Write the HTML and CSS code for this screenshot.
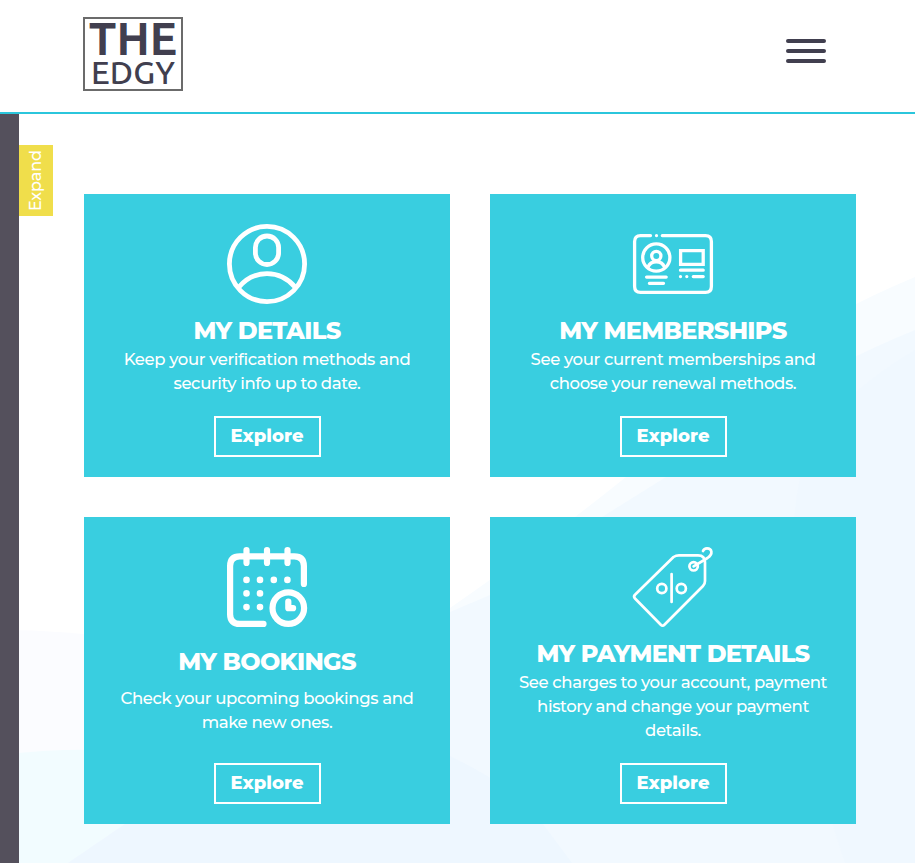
FILE: index.html
```html
<!DOCTYPE html>
<html lang="en">
<head>
<meta charset="utf-8">
<title>The Edgy</title>
<link rel="stylesheet" href="styles.css">
</head>
<body>
<header class="header">
  <div class="logo">
    <span class="logo-the">THE</span>
    <span class="logo-edgy">EDGY</span>
  </div>
  <button class="menu" aria-label="Menu"><span></span><span></span><span></span></button>
</header>
<div class="body">
  <svg class="backdrop" viewBox="0 114 915 749" aria-hidden="true">
    <path fill="#fbfcff" d="M0 630Q240 630 450 757V863H0Z"/>
    <path fill="#f2fcff" d="M0 755Q160 735 320 790V863H0Z"/>
    <path fill="#f8fcff" d="M915 277Q740 350 626 477Q540 546 450 608L400 700H915Z"/>
    <path fill="#f2f9ff" d="M915 330Q780 385 666 477L602 517L490 595L450 612L125 824L68 863H915Z"/>
    <path fill="#f0f8ff" d="M915 350Q815 410 800 477Q770 640 845 863H915Z"/>
    <path fill="#eef7ff" d="M125 824L350 750H437Q515 785 543 824L572 863H68Z"/>
  </svg>
  <aside class="sidebar"></aside>
  <button class="expand">Expand</button>
  <main class="cards">
    <section class="card">
      <svg class="icon" viewBox="0 0 80 80" fill="none" stroke="#fff" stroke-width="4.8">
        <circle cx="40" cy="40" r="37.6"/>
        <rect x="28.4" y="12" width="23.2" height="28.5" rx="11.6"/>
        <path d="M11.5 63.5C27 45 53 45 68.5 63.5"/>
      </svg>
      <h2>MY DETAILS</h2>
      <p>Keep your verification methods and<br>security info up to date.</p>
      <a class="explore">Explore</a>
    </section>
    <section class="card">
      <svg class="icon" viewBox="0 0 80 80" fill="none" stroke="#fff" stroke-width="3.3" stroke-linecap="round">
        <path d="M17.5 11.6H7.5Q1.6 11.6 1.6 17.5V62.5Q1.6 68.4 7.5 68.4H72.5Q78.4 68.4 78.4 62.5V17.5Q78.4 11.6 72.5 11.6H29.3M23.5 11.6h.01"/>
        <circle cx="23.3" cy="33.5" r="13.6"/>
        <circle cx="23.3" cy="32" r="4.6"/>
        <path d="M15 43C18 36 28.5 36 31.5 43"/>
        <path stroke-linecap="butt" d="M47.6 26.6H70.2V40.4H47.6Z"/>
        <path d="M47.5 46.2H70.2M47.5 52.6h.01M53.8 52.6h.01M60.3 52.6H70.2M13.6 53.1H33.2M16.4 59.3H30.5"/>
      </svg>
      <h2>MY MEMBERSHIPS</h2>
      <p>See your current memberships and<br>choose your renewal methods.</p>
      <a class="explore">Explore</a>
    </section>
    <section class="card bookings">
      <svg class="icon" viewBox="0 0 80 80" fill="none" stroke="#fff" stroke-width="6.2" stroke-linecap="round">
        <path d="M36.5 76.9H12.8Q3.1 76.9 3.1 67.2V19Q3.1 9.3 12.8 9.3H67.2Q76.9 9.3 76.9 19V37M19.5 3.1V16M40 3.1V16M60.5 3.1V16"/>
        <circle cx="61.3" cy="61.1" r="15.8"/>
        <path d="M61.3 54.5V61.2H66.1" stroke-linejoin="round"/>
        <path stroke-width="6.6" d="M19.5 32.9h.01M33 32.9h.01M46.8 32.9h.01M60.4 32.9h.01M19.5 46.4h.01M33 46.4h.01M19.5 60.1h.01M33 60.1h.01"/>
      </svg>
      <h2>MY BOOKINGS</h2>
      <p>Check your upcoming bookings and<br>make new ones.</p>
      <a class="explore">Explore</a>
    </section>
    <section class="card">
      <svg class="icon" viewBox="0 0 80 80" fill="none" stroke="#fff" stroke-width="2.7" stroke-linecap="round" stroke-linejoin="round">
        <path d="M2 47.8L40.5 10Q43 8.3 46 8.3H65Q72 8.3 72 15.5V34Q72 37 70 39L31.4 77.7Q29.6 79.5 27.8 77.7L2 51.5Q.2 49.6 2 47.8ZM38.6 27V55"/>
        <circle cx="28.8" cy="41.5" r="4.6"/>
        <circle cx="48.3" cy="41.5" r="4.6"/>
        <circle cx="60.6" cy="19.3" r="4.2"/>
        <path d="M60.6 19.3L74.5 11C80.5 7 79 1.3 74 1.3Q71 1.3 70 4"/>
      </svg>
      <h2>MY PAYMENT DETAILS</h2>
      <p>See charges to your account, payment<br>history and change your payment<br>details.</p>
      <a class="explore">Explore</a>
    </section>
  </main>
</div>
</body>
</html>
```
FILE: styles.css
```css
* { box-sizing: border-box; }
body {
  margin: 0;
  height: 863px;
  overflow: hidden;
  font-family: Montserrat, Inter, sans-serif;
  background: #fff;
}
.header {
  height: 114px;
  border-bottom: 2px solid #2bc6dc;
  padding: 17px 89px 0 83px;
  display: flex;
  justify-content: space-between;
}
.logo {
  width: 100px;
  height: 74px;
  border: 2px solid #6b6b6b;
  display: flex;
  flex-direction: column;
  align-items: center;
  color: #413f4f;
  font-family: Ubuntu, "Noto Sans", "Open Sans", sans-serif;
  white-space: nowrap;
}
.logo-the { font-size: 46px; line-height: 39px; font-weight: 600; }
.logo-edgy { font-size: 32.5px; line-height: 28px; font-weight: 500; letter-spacing: 0.2px; }
.menu {
  width: 40px;
  height: 24px;
  margin-top: 22px;
  padding: 0;
  border: 0;
  background: none;
  display: flex;
  flex-direction: column;
  gap: 6px;
}
.menu span { width: 40px; height: 4px; border-radius: 2px; background: #413f4f; }
.body { position: relative; height: 749px; display: flex; align-items: flex-start; }
.backdrop { position: absolute; inset: 0; width: 915px; height: 749px; z-index: -1; }
.sidebar { width: 19px; height: 749px; background: #54505c; }
.expand {
  width: 34px;
  height: 71px;
  margin-top: 31px;
  padding: 0;
  border: 0;
  background: #f0de4b;
  color: #fff;
  font: 500 16px/34px Montserrat, Inter, sans-serif;
  letter-spacing: -0.15px;
  writing-mode: vertical-rl;
  transform: rotate(180deg);
}
.cards {
  margin: 80px 0 0 31px;
  display: grid;
  grid-template-columns: 366px 366px;
  grid-template-rows: 283px 307px;
  gap: 40px;
}
.card {
  background: #39cee0;
  color: #fff;
  padding: 30px 10px 20px;
  display: flex;
  flex-direction: column;
  align-items: center;
  text-align: center;
  white-space: nowrap;
}
.icon { width: 80px; height: 80px; flex: none; overflow: visible; }
h2 { margin: 12px 0 0; font-size: 24px; line-height: 29px; font-weight: 800; letter-spacing: -0.67px; }
p { margin: 2px 0 0; font-size: 16.5px; line-height: 24px; font-weight: 500; letter-spacing: -0.37px; }
.bookings h2 { margin-top: 20px; }
.bookings p { margin-top: 10px; }
.explore {
  width: 107px;
  height: 41px;
  margin-top: auto;
  border: 2px solid #fff;
  font-size: 18px;
  line-height: 36px;
  font-weight: 800;
  letter-spacing: 0.05px;
}
```
